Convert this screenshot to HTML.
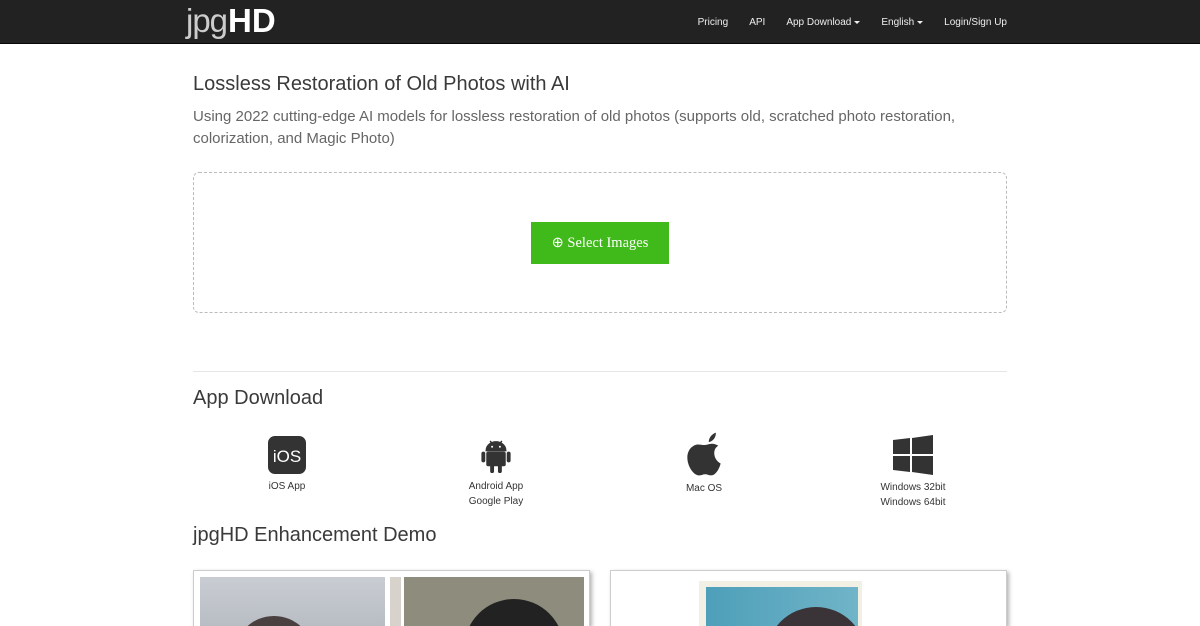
<!DOCTYPE html>
<html><head><meta charset="utf-8"><style>
*{margin:0;padding:0;box-sizing:border-box}
html,body{width:1200px;height:626px;overflow:hidden}
body{background:#fff;font-family:"Liberation Sans",sans-serif;color:#333;position:relative}
.nav{height:44px;background:#222;border-bottom:1px solid #080808;position:relative}
.logo{position:absolute;left:186px;top:3px;color:#fff;font-size:33px;line-height:36px}
.logo .l{font-weight:normal;color:#ccc;letter-spacing:-1px}
.logo b{font-weight:bold;margin-left:1px}
.menu{position:absolute;right:193px;top:1px;display:flex;font-size:10px;color:#eee;line-height:43px}
.menu span{margin-left:21px}
.car{display:inline-block;border-top:3px solid #eee;border-left:3px solid transparent;border-right:3px solid transparent;vertical-align:middle;margin-left:3px}
h1{position:absolute;left:193px;top:73px;font-weight:normal;font-size:20px;color:#3a3a3a}
.sub{position:absolute;left:193px;top:106px;width:790px;font-size:15px;line-height:22px;color:#666}
.drop{position:absolute;left:193px;top:172px;width:814px;height:141px;border:1px dashed #bbb;border-radius:6px}
.btn{position:absolute;left:337px;top:49px;width:138px;height:42px;background:#40b91b;color:#fff;font-family:"Liberation Serif",serif;font-size:14.5px;line-height:42px;text-align:center}
.hr{position:absolute;left:193px;top:371px;width:814px;border-top:1px solid #e5e5e5}
h2{position:absolute;left:193px;font-weight:normal;font-size:20px;color:#3a3a3a}
.app{position:absolute;top:433px;width:120px;text-align:center;font-size:10px;line-height:15px;color:#333}
.app svg{display:block;margin:0 auto 5px}
.card{position:absolute;top:570px;height:56px;border:1px solid #ccc;border-bottom:none;box-shadow:2px 2px 4px rgba(0,0,0,.3);background:#fff;overflow:hidden}
</style></head><body>
<div class="nav"><div class="logo"><span class="l">jpg</span><b>HD</b></div>
<div class="menu"><span>Pricing</span><span>API</span><span>App Download<i class="car"></i></span><span>English<i class="car"></i></span><span>Login/Sign Up</span></div></div>
<h1>Lossless Restoration of Old Photos with AI</h1>
<div class="sub">Using 2022 cutting-edge AI models for lossless restoration of old photos (supports old, scratched photo restoration, colorization, and Magic Photo)</div>
<div class="drop"><div class="btn">⊕ Select Images</div></div>
<div class="hr"></div>
<h2 style="top:387px">App Download</h2>
<div class="app" style="left:227px;top:436px"><svg width="38" height="38"><rect width="38" height="38" rx="7" fill="#333"/><text x="19" y="26" fill="#fff" font-size="17" text-anchor="middle" font-family="Liberation Sans">iOS</text></svg>iOS App</div>
<div class="app" style="left:436px;top:437px"><svg width="32" height="37" viewBox="0 0 32 38"><path d="M6 14a10 9 0 0 1 20 0z M10 4l3 4 M22 4l-3 4" fill="#333" stroke="#333" stroke-width="1.5"/><rect x="6" y="15" width="20" height="15" rx="2" fill="#333"/><rect x="1" y="15" width="4" height="11" rx="2" fill="#333"/><rect x="27" y="15" width="4" height="11" rx="2" fill="#333"/><rect x="10" y="28" width="4" height="9" rx="2" fill="#333"/><rect x="18" y="28" width="4" height="9" rx="2" fill="#333"/><circle cx="12" cy="10" r="1" fill="#fff"/><circle cx="20" cy="10" r="1" fill="#fff"/></svg>Android App<br>Google Play</div>
<div class="app" style="left:644px;top:432px"><svg width="36" height="44" viewBox="1.5 1.5 29 37"><path d="M19 12c3-1 6-1 9 1-3 2-4 5-3 9 1 3 3 5 5 6-1 4-4 10-8 10-2 0-3-1-5-1s-3 1-5 1C7 38 2 30 2 23c0-7 5-11 9-11 3 0 5 1 8 0z M20 10c0-4 3-7 6-8 0 4-2 7-6 8z" fill="#333"/></svg>Mac OS</div>
<div class="app" style="left:853px;top:435px"><svg width="40" height="40" viewBox="0 0 40 40"><path d="M0 5l17-2v16H0z M19 3l21-3v19H19z M0 21h17v16L0 35z M19 21h21v19l-21-3z" fill="#333"/></svg>Windows 32bit<br>Windows 64bit</div>
<h2 style="top:524px">jpgHD Enhancement Demo</h2>
<div class="card" style="left:193px;width:397px"><div style="position:absolute;left:6px;top:6px;width:185px;height:80px;background:linear-gradient(#c9cdd3,#aeb3ba)"></div><div style="position:absolute;left:196px;top:6px;width:11px;height:80px;background:#d8d2cc"></div><div style="position:absolute;left:210px;top:6px;width:180px;height:80px;background:#8e8c7c"></div><div style="position:absolute;left:270px;top:28px;width:100px;height:60px;border-radius:50px 50px 0 0;background:#222"></div><div style="position:absolute;left:40px;top:45px;width:80px;height:40px;border-radius:40px 40px 0 0;background:#4a4040"></div></div>
<div class="card" style="left:610px;width:397px"><div style="position:absolute;left:88px;top:10px;width:163px;height:80px;background:#f2efe4"></div><div style="position:absolute;left:95px;top:16px;width:152px;height:80px;background:linear-gradient(90deg,#4e9fb9,#70b4c8)"></div><div style="position:absolute;left:155px;top:36px;width:100px;height:50px;border-radius:50px 50px 0 0;background:#3a3438"></div></div>
</body></html>
